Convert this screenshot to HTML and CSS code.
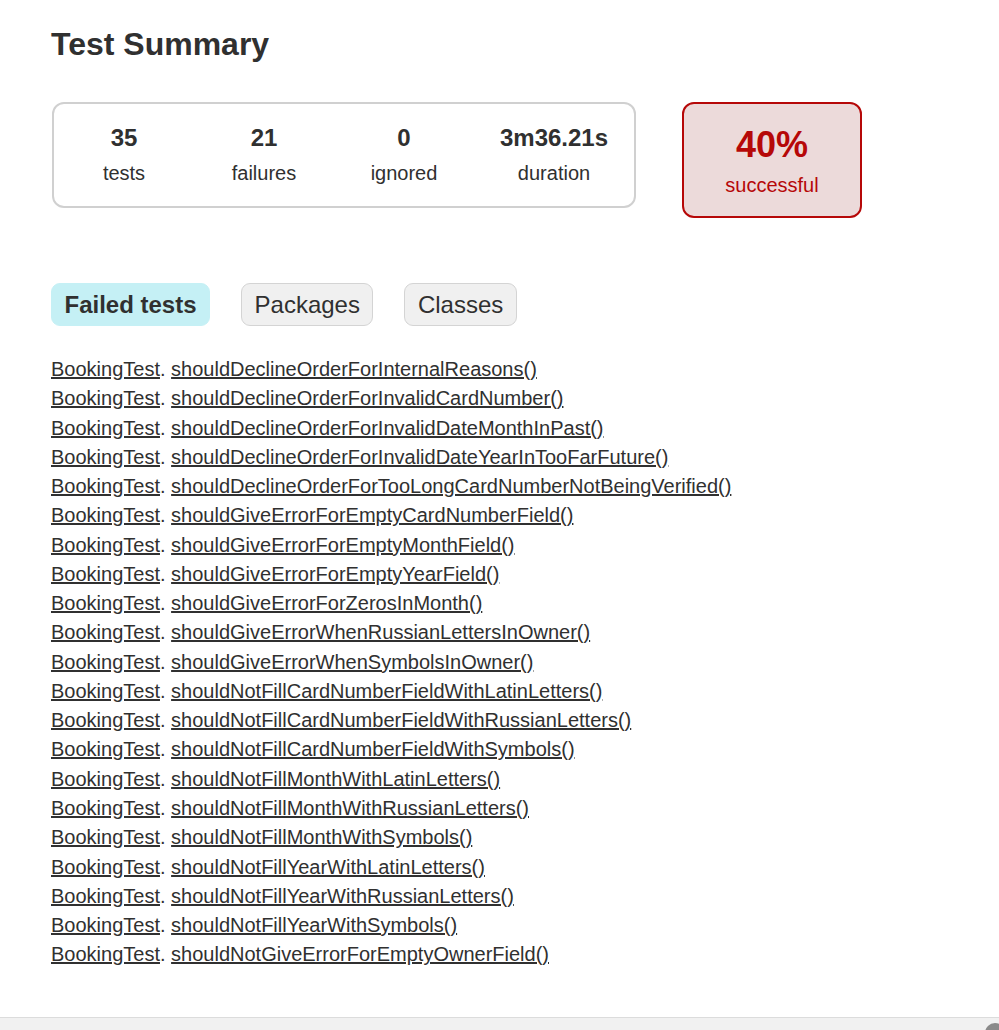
FILE: index.html
```html
<!DOCTYPE html>
<html lang="en">
<head>
<meta charset="utf-8">
<title>Test results - Test Summary</title>
<link rel="stylesheet" href="styles.css">
</head>
<body>
<div class="page">
  <div class="content">
    <h1 class="title">Test Summary</h1>
    <div class="summary">
      <div class="summary-group">
        <div class="info-box"><div class="counter">35</div><p>tests</p></div>
        <div class="info-box"><div class="counter">21</div><p>failures</p></div>
        <div class="info-box"><div class="counter">0</div><p>ignored</p></div>
        <div class="info-box duration"><div class="counter">3m36.21s</div><p>duration</p></div>
      </div>
      <div class="success-rate failures">
        <div class="percent">40%</div>
        <p>successful</p>
      </div>
    </div>
    <ul class="tab-links">
      <li class="selected"><a href="#tab0">Failed tests</a></li>
      <li><a href="#tab1">Packages</a></li>
      <li><a href="#tab2">Classes</a></li>
    </ul>
    <ul class="link-list">
      <li><a href="#">BookingTest</a>. <a href="#">shouldDeclineOrderForInternalReasons()</a></li>
      <li><a href="#">BookingTest</a>. <a href="#">shouldDeclineOrderForInvalidCardNumber()</a></li>
      <li><a href="#">BookingTest</a>. <a href="#">shouldDeclineOrderForInvalidDateMonthInPast()</a></li>
      <li><a href="#">BookingTest</a>. <a href="#">shouldDeclineOrderForInvalidDateYearInTooFarFuture()</a></li>
      <li><a href="#">BookingTest</a>. <a href="#">shouldDeclineOrderForTooLongCardNumberNotBeingVerified()</a></li>
      <li><a href="#">BookingTest</a>. <a href="#">shouldGiveErrorForEmptyCardNumberField()</a></li>
      <li><a href="#">BookingTest</a>. <a href="#">shouldGiveErrorForEmptyMonthField()</a></li>
      <li><a href="#">BookingTest</a>. <a href="#">shouldGiveErrorForEmptyYearField()</a></li>
      <li><a href="#">BookingTest</a>. <a href="#">shouldGiveErrorForZerosInMonth()</a></li>
      <li><a href="#">BookingTest</a>. <a href="#">shouldGiveErrorWhenRussianLettersInOwner()</a></li>
      <li><a href="#">BookingTest</a>. <a href="#">shouldGiveErrorWhenSymbolsInOwner()</a></li>
      <li><a href="#">BookingTest</a>. <a href="#">shouldNotFillCardNumberFieldWithLatinLetters()</a></li>
      <li><a href="#">BookingTest</a>. <a href="#">shouldNotFillCardNumberFieldWithRussianLetters()</a></li>
      <li><a href="#">BookingTest</a>. <a href="#">shouldNotFillCardNumberFieldWithSymbols()</a></li>
      <li><a href="#">BookingTest</a>. <a href="#">shouldNotFillMonthWithLatinLetters()</a></li>
      <li><a href="#">BookingTest</a>. <a href="#">shouldNotFillMonthWithRussianLetters()</a></li>
      <li><a href="#">BookingTest</a>. <a href="#">shouldNotFillMonthWithSymbols()</a></li>
      <li><a href="#">BookingTest</a>. <a href="#">shouldNotFillYearWithLatinLetters()</a></li>
      <li><a href="#">BookingTest</a>. <a href="#">shouldNotFillYearWithRussianLetters()</a></li>
      <li><a href="#">BookingTest</a>. <a href="#">shouldNotFillYearWithSymbols()</a></li>
      <li><a href="#">BookingTest</a>. <a href="#">shouldNotGiveErrorForEmptyOwnerField()</a></li>
    </ul>
  </div>
  <div class="bottom-bar"><span class="bar-knob"></span></div>
</div>
</body>
</html>
```

FILE: styles.css
```css
html, body {
  margin: 0;
  padding: 0;
  background: #ffffff;
}

body {
  font-family: "Liberation Sans", Arial, sans-serif;
  font-size: 20px;
  color: #303030;
}

.page {
  height: 1030px;
  overflow: hidden;
  display: flex;
  flex-direction: column;
}

.content {
  flex: 1;
  padding: 26px 0 0 51px;
}

a, a:visited {
  color: #303030;
}

.title {
  margin: 0;
  font-size: 32px;
  line-height: 37px;
  font-weight: bold;
  white-space: nowrap;
}

.summary {
  display: flex;
  align-items: flex-start;
  margin: 39px 0 0 1px;
}

.summary-group {
  display: flex;
  border: 2px solid #d0d0d0;
  border-radius: 12px;
  width: 580px;
}

.info-box {
  width: 140px;
  padding: 20px 0 21px;
  text-align: center;
}

.info-box.duration {
  width: 160px;
}

.info-box p,
.success-rate p {
  margin: 0;
  line-height: 23px;
}

.counter {
  font-size: 24px;
  line-height: 28px;
  font-weight: bold;
  margin-bottom: 10px;
}

.success-rate {
  width: 176px;
  margin-left: 46px;
  padding: 20px 0 19px;
  text-align: center;
  border: 2px solid #d0d0d0;
  border-radius: 12px;
}

.success-rate.failures {
  background-color: #ecdada;
  border-color: #b60808;
  color: #b60808;
}

.percent {
  font-size: 36px;
  line-height: 41px;
  font-weight: bold;
  margin-bottom: 9px;
}

.tab-links {
  display: flex;
  gap: 31px;
  list-style: none;
  margin: 65px 0 0;
  padding: 0;
}

.tab-links li {
  padding: 7px 12.5px;
  border: 1px solid #d4d4d4;
  border-radius: 9px;
  background-color: #f0f0f0;
}

.tab-links li.selected {
  background-color: #c5f0f5;
  border-color: #c5f0f5;
}

.tab-links li.selected a {
  font-weight: bold;
}

.tab-links a {
  display: block;
  font-size: 24px;
  line-height: 27px;
  text-decoration: none;
  white-space: nowrap;
}

.link-list {
  list-style: none;
  margin: 32px 0 0;
  padding: 0;
}

.link-list li {
  line-height: 23px;
  margin-bottom: 6.28px;
  white-space: nowrap;
}

.bottom-bar {
  position: relative;
  flex: 0 0 auto;
  height: 12px;
  border-top: 1px solid #dcdcdc;
  background: #f1f1f1;
  overflow: hidden;
}

.bar-knob {
  position: absolute;
  right: -6px;
  top: 5px;
  width: 20px;
  height: 20px;
  border-radius: 50%;
  background: #8a8a8a;
}
```
